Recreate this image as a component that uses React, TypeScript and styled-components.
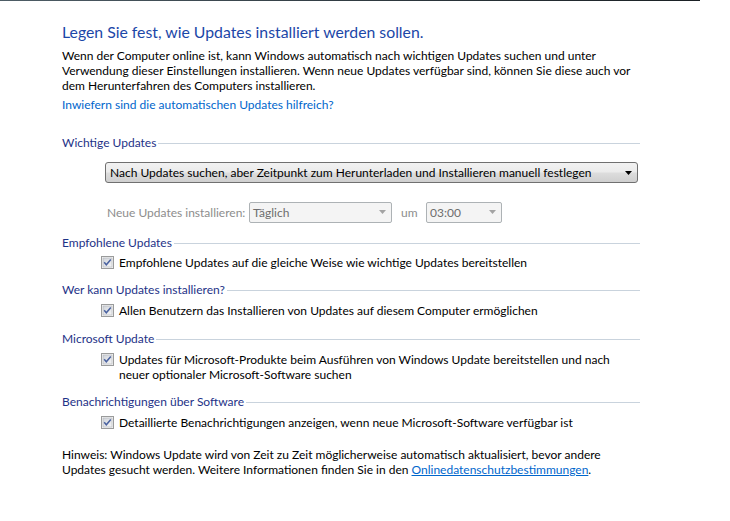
import React from "react";
import styled, { createGlobalStyle } from "styled-components";

const Global = createGlobalStyle`
  html, body { margin: 0; padding: 0; background: #ffffff; }
  body { font-family: "Lato", "Noto Sans", "Liberation Sans", sans-serif; font-size: 12px; color: #000; }
`;

const Page = styled.div`
  width: 730px;
  height: 521px;
  overflow: hidden;
  background: #fff;
`;

const TopLine = styled.div`
  width: 700px;
  height: 1px;
  background: linear-gradient(to right, #4e5d66, #2b353b 60%, #1a2024);
`;

const Content = styled.div`
  width: 578px;
  margin-left: 62px;
  display: flex;
  flex-direction: column;
`;

const Title = styled.h1`
  margin: 21px 0 0 0;
  font-size: 15.8px;
  line-height: 20px;
  font-weight: normal;
  color: #1c47a8;
`;

const Para = styled.p<{ $top: number }>`
  margin: ${(p) => p.$top}px 0 0 0;
  font-size: 12px;
  line-height: 15px;
  color: #000;
`;

const Link = styled.a`
  color: #0066cc;
  text-decoration: none;
  cursor: pointer;
`;

const ULink = styled.a`
  color: #0066cc;
  text-decoration: underline;
  cursor: pointer;
`;

const LinkLine = styled.div`
  margin-top: 4px;
  line-height: 15px;
`;

const SectionHeader = styled.div<{ $top: number }>`
  margin-top: ${(p) => p.$top}px;
  display: flex;
  align-items: center;
  line-height: 15px;
  color: #1e3287;
  &::after {
    content: "";
    flex: 1;
    height: 1px;
    margin-left: 2px;
    margin-top: 1px;
    background: #c9d3dd;
  }
`;

const Combo = styled.div`
  margin: 12px 0 0 43px;
  width: 527px;
  height: 19px;
  border: 1px solid #707070;
  border-radius: 3px;
  background: linear-gradient(#f2f2f2 0%, #ebebeb 48%, #dddddd 52%, #cfcfcf 100%);
  display: flex;
  align-items: center;
  padding: 0 0 0 4px;
  box-sizing: content-box;
  line-height: 15px;
`;

const ComboText = styled.span`
  flex: 1;
  color: #000;
`;

const Arrow = styled.svg`
  width: 7px;
  height: 4px;
  margin-right: 5px;
`;

const ScheduleRow = styled.div`
  margin: 18px 0 0 45px;
  display: flex;
  align-items: center;
  height: 22px;
  color: #8d8d8d;
`;

const DisabledSelect = styled.div<{ $w: number }>`
  width: ${(p) => p.$w}px;
  height: 21px;
  border: 1px solid #adb2b5;
  border-radius: 2px;
  background: #f4f4f4;
  display: flex;
  align-items: center;
  padding-left: 3px;
  box-sizing: border-box;
  color: #6d6d6d;
`;

const SelectText = styled.span`
  flex: 1;
`;

const Label = styled.span<{ $w: number; $pad?: number }>`
  width: ${(p) => p.$w}px;
  padding-left: ${(p) => p.$pad ?? 0}px;
  box-sizing: border-box;
`;

const CheckRow = styled.div<{ $top: number }>`
  margin: ${(p) => p.$top}px 0 0 39px;
  display: flex;
  align-items: flex-start;
  line-height: 15px;
`;

const Box = styled.svg`
  width: 13px;
  height: 13px;
  flex: none;
  margin-top: 1px;
  margin-right: 5px;
`;

const CheckText = styled.span`
  color: #000;
`;

const Check = () => (
  <Box viewBox="0 0 13 13">
    <defs>
      <linearGradient id="cbg" x1="0" y1="0" x2="1" y2="1">
        <stop offset="0" stopColor="#cfd3d9" />
        <stop offset="1" stopColor="#f6f6f6" />
      </linearGradient>
    </defs>
    <rect x="0.5" y="0.5" width="12" height="12" fill="#f4f4f4" stroke="#9a9b9b" />
    <rect x="2" y="2" width="9" height="9" fill="url(#cbg)" stroke="#b0b3b8" strokeWidth="0.6" />
    <path d="M3.2 6.3 L5.3 8.8 L9.8 3.4" fill="none" stroke="#4a62a0" strokeWidth="1.5" />
  </Box>
);

const DownArrow = ({ color }: { color: string }) => (
  <Arrow viewBox="0 0 7 4">
    <path d="M0 0 H7 L3.5 4 Z" fill={color} />
  </Arrow>
);

export default function App() {
  return (
    <Page>
      <Global />
      <TopLine />
      <Content>
        <Title>Legen Sie fest, wie Updates installiert werden sollen.</Title>
        <Para $top={6}>
          Wenn der Computer online ist, kann Windows automatisch nach wichtigen Updates suchen und unter
          Verwendung dieser Einstellungen installieren. Wenn neue Updates verfügbar sind, können Sie diese auch vor
          dem Herunterfahren des Computers installieren.
        </Para>
        <LinkLine>
          <Link>Inwiefern sind die automatischen Updates hilfreich?</Link>
        </LinkLine>

        <SectionHeader $top={23}>Wichtige Updates</SectionHeader>
        <Combo>
          <ComboText>Nach Updates suchen, aber Zeitpunkt zum Herunterladen und Installieren manuell festlegen</ComboText>
          <DownArrow color="#000" />
        </Combo>
        <ScheduleRow>
          <Label $w={142}>Neue Updates installieren:</Label>
          <DisabledSelect $w={143}>
            <SelectText>Täglich</SelectText>
            <DownArrow color="#a3a3a3" />
          </DisabledSelect>
          <Label $w={34} $pad={9}>um</Label>
          <DisabledSelect $w={76}>
            <SelectText>03:00</SelectText>
            <DownArrow color="#a3a3a3" />
          </DisabledSelect>
        </ScheduleRow>

        <SectionHeader $top={12}>Empfohlene Updates</SectionHeader>
        <CheckRow $top={5}>
          <Check />
          <CheckText>Empfohlene Updates auf die gleiche Weise wie wichtige Updates bereitstellen</CheckText>
        </CheckRow>

        <SectionHeader $top={12}>Wer kann Updates installieren?</SectionHeader>
        <CheckRow $top={6}>
          <Check />
          <CheckText>Allen Benutzern das Installieren von Updates auf diesem Computer ermöglichen</CheckText>
        </CheckRow>

        <SectionHeader $top={13}>Microsoft Update</SectionHeader>
        <CheckRow $top={6}>
          <Check />
          <CheckText>
            Updates für Microsoft-Produkte beim Ausführen von Windows Update bereitstellen und nach
            <br />
            neuer optionaler Microsoft-Software suchen
          </CheckText>
        </CheckRow>

        <SectionHeader $top={12}>Benachrichtigungen über Software</SectionHeader>
        <CheckRow $top={6}>
          <Check />
          <CheckText>Detaillierte Benachrichtigungen anzeigen, wenn neue Microsoft-Software verfügbar ist</CheckText>
        </CheckRow>

        <Para $top={17}>
          Hinweis: Windows Update wird von Zeit zu Zeit möglicherweise automatisch aktualisiert, bevor andere
          <br />
          Updates gesucht werden. Weitere Informationen finden Sie in den{" "}
          <ULink>Onlinedatenschutzbestimmungen</ULink>.
        </Para>
      </Content>
    </Page>
  );
}
